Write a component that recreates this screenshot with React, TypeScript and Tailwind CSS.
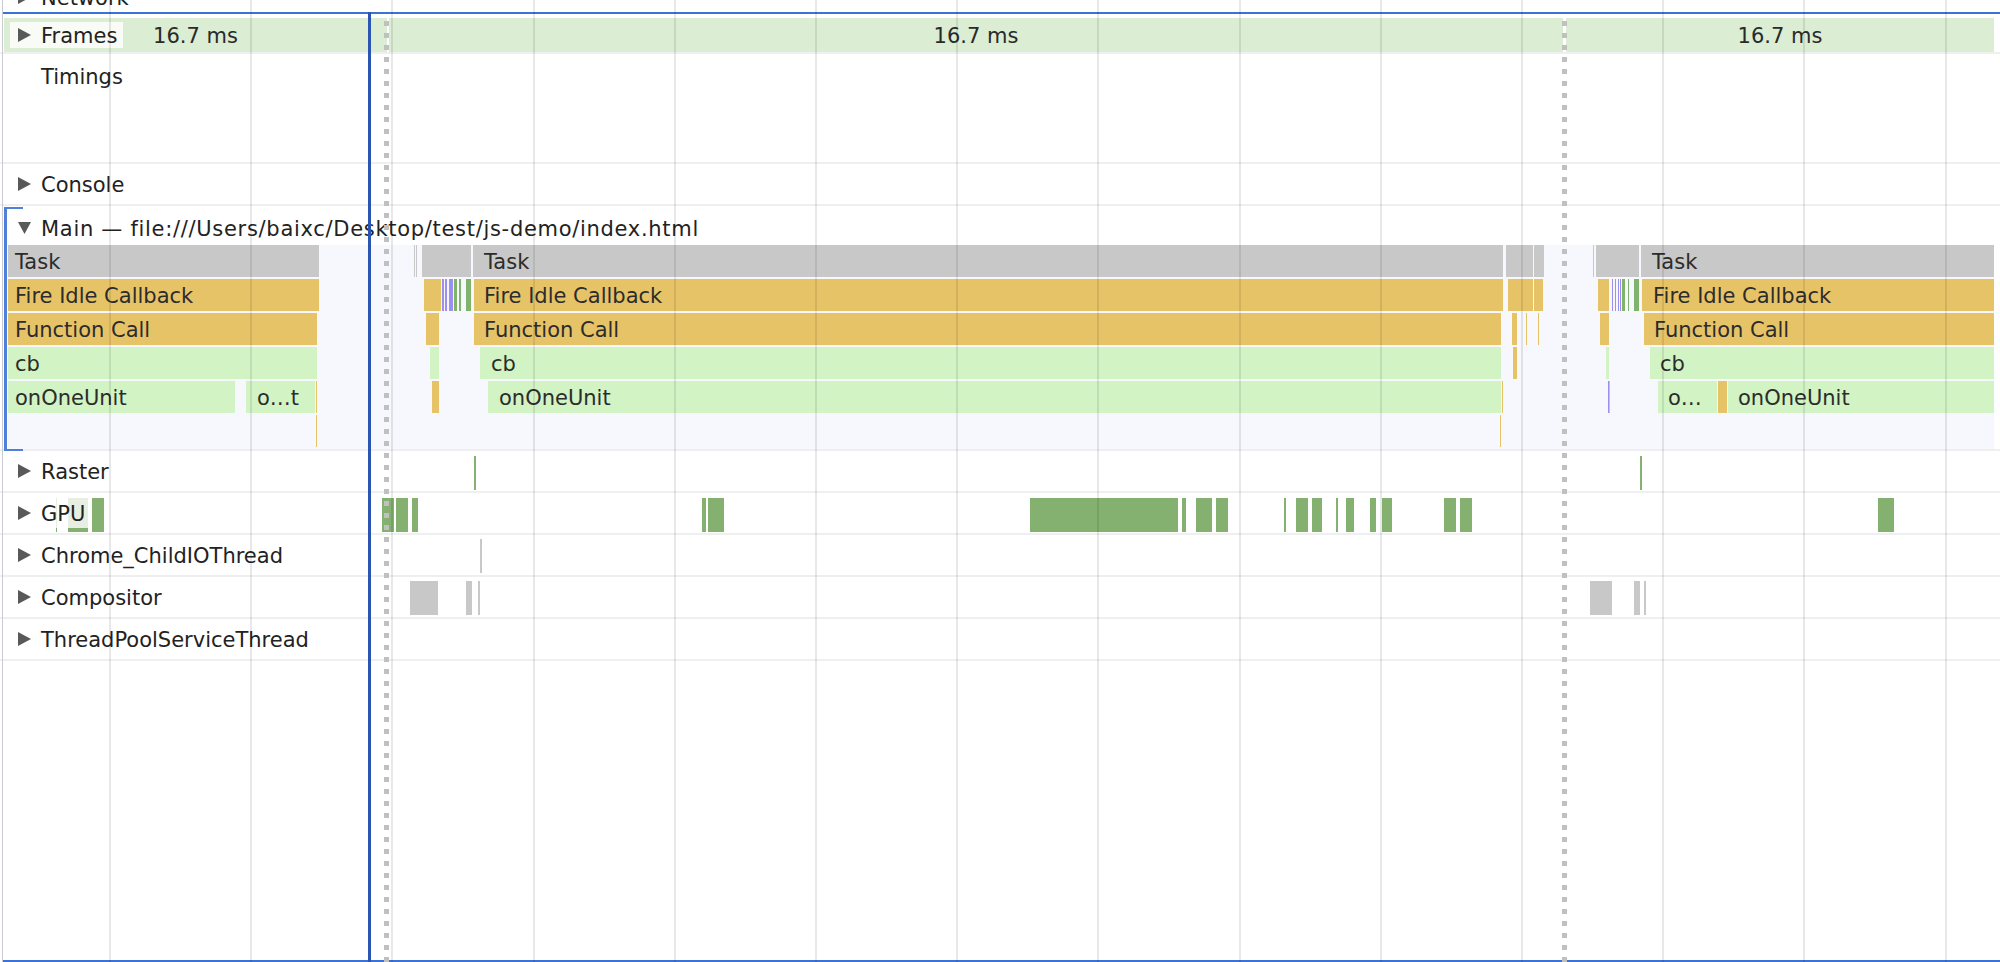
import React from "react";

type Bar = { x1: number; x2: number; c: string; t?: string; tx?: number };

const C = {
  task: "bg-[#c8c8c8]",
  y: "bg-[#e7c368]",
  g: "bg-[#d2f3c4]",
  p: "bg-[#9d8fef]",
  dg: "bg-[#80b36c]",
  gpu: "bg-[#84b070]",
  gray: "bg-[#c8c8c8]",
};

const mainRows: Bar[][] = [
  [
    { x1: 8, x2: 319, c: C.task, t: "Task", tx: 15 },
    { x1: 414, x2: 415, c: C.task },
    { x1: 416, x2: 417, c: C.task },
    { x1: 422, x2: 471, c: C.task },
    { x1: 473, x2: 1503, c: C.task, t: "Task", tx: 484 },
    { x1: 1506, x2: 1533, c: C.task },
    { x1: 1534, x2: 1544, c: C.task },
    { x1: 1593, x2: 1594, c: C.task },
    { x1: 1596, x2: 1639, c: C.task },
    { x1: 1641, x2: 1994, c: C.task, t: "Task", tx: 1652 },
  ],
  [
    { x1: 8, x2: 319, c: C.y, t: "Fire Idle Callback", tx: 15 },
    { x1: 424, x2: 441, c: C.y },
    { x1: 442, x2: 444, c: C.p },
    { x1: 445, x2: 447, c: C.p },
    { x1: 449, x2: 453, c: C.p },
    { x1: 454, x2: 457, c: C.dg },
    { x1: 459, x2: 461, c: C.dg },
    { x1: 466, x2: 471, c: C.dg },
    { x1: 474, x2: 1503, c: C.y, t: "Fire Idle Callback", tx: 484 },
    { x1: 1508, x2: 1533, c: C.y },
    { x1: 1534, x2: 1543, c: C.y },
    { x1: 1598, x2: 1609, c: C.y },
    { x1: 1612, x2: 1613, c: C.p },
    { x1: 1615, x2: 1616, c: C.p },
    { x1: 1618, x2: 1619, c: C.p },
    { x1: 1620, x2: 1621, c: C.p },
    { x1: 1622, x2: 1625, c: C.dg },
    { x1: 1628, x2: 1629, c: C.dg },
    { x1: 1634, x2: 1639, c: C.dg },
    { x1: 1642, x2: 1994, c: C.y, t: "Fire Idle Callback", tx: 1653 },
  ],
  [
    { x1: 8, x2: 317, c: C.y, t: "Function Call", tx: 15 },
    { x1: 426, x2: 439, c: C.y },
    { x1: 474, x2: 1501, c: C.y, t: "Function Call", tx: 484 },
    { x1: 1512, x2: 1517, c: C.y },
    { x1: 1526, x2: 1527, c: C.y },
    { x1: 1538, x2: 1539, c: C.y },
    { x1: 1600, x2: 1609, c: C.y },
    { x1: 1644, x2: 1994, c: C.y, t: "Function Call", tx: 1654 },
  ],
  [
    { x1: 8, x2: 317, c: C.g, t: "cb", tx: 15 },
    { x1: 430, x2: 439, c: C.g },
    { x1: 480, x2: 1501, c: C.g, t: "cb", tx: 491 },
    { x1: 1513, x2: 1517, c: C.y },
    { x1: 1606, x2: 1609, c: C.g },
    { x1: 1650, x2: 1994, c: C.g, t: "cb", tx: 1660 },
  ],
  [
    { x1: 8, x2: 235, c: C.g, t: "onOneUnit", tx: 15 },
    { x1: 246, x2: 315, c: C.g, t: "o…t", tx: 257 },
    { x1: 316, x2: 317, c: C.y },
    { x1: 432, x2: 439, c: C.y },
    { x1: 488, x2: 1501, c: C.g, t: "onOneUnit", tx: 499 },
    { x1: 1502, x2: 1503, c: C.y },
    { x1: 1608, x2: 1609, c: C.p },
    { x1: 1609, x2: 1610, c: C.y },
    { x1: 1658, x2: 1717, c: C.g, t: "o…", tx: 1668 },
    { x1: 1718, x2: 1727, c: C.y },
    { x1: 1728, x2: 1994, c: C.g, t: "onOneUnit", tx: 1738 },
  ],
  [
    { x1: 316, x2: 317, c: C.y },
    { x1: 1500, x2: 1501, c: C.y },
  ],
];

const gpu: [number, number][] = [
  [56, 57], [68, 88], [92, 104], [382, 394], [396, 408], [412, 418], [702, 706], [708, 724],
  [1030, 1178], [1182, 1186], [1196, 1212], [1216, 1228], [1284, 1286], [1296, 1308], [1312, 1322],
  [1336, 1338], [1346, 1354], [1370, 1376], [1382, 1392], [1444, 1456], [1460, 1472], [1878, 1894],
];
const raster: [number, number][] = [[474, 476], [1640, 1642]];
const childIO: [number, number][] = [[480, 482]];
const compositor: [number, number][] = [[410, 438], [466, 472], [478, 480], [1590, 1612], [1634, 1640], [1644, 1646]];

const gridXs = [109, 250, 391, 533, 674, 815, 956, 1097, 1239, 1380, 1521, 1662, 1803, 1945];

const Right = () => (
  <svg width="13" height="14" viewBox="0 0 13 14" className="shrink-0">
    <path d="M0 0 L13 7 L0 14 Z" fill="#595959" />
  </svg>
);
const Down = () => (
  <svg width="13" height="12" viewBox="0 0 13 12" className="shrink-0">
    <path d="M0 0 L13 0 L6.5 12 Z" fill="#595959" />
  </svg>
);

function Track({ label, events, top }: { label: string; events: [number, number][]; top: number }) {
  return (
    <div className="relative h-[42px] border-b-2 border-[#efefef] flex items-center">
      <div className="absolute inset-0">
        {events.map(([a, b], i) => (
          <div
            key={i}
            className={`absolute h-[34px] ${label === "GPU" || label === "Raster" ? C.gpu : C.gray}`}
            style={{ left: a, width: b - a, top }}
          />
        ))}
      </div>
      <div className="relative flex items-center h-[30px] ml-[10px] pl-[8px] pr-[6px] gap-[10px] bg-white/80">
        <Right />
        <span className="whitespace-nowrap pt-[4px]">{label}</span>
      </div>
    </div>
  );
}

export default function App() {
  return (
    <div className="relative w-[2000px] h-[962px] overflow-hidden bg-white font-['DejaVu_Sans',sans-serif] text-[21px] text-[#222]">
      <div className="flex flex-col h-full">
        {/* Network (cut off by the top edge) */}
        <div className="h-[12px] overflow-hidden">
          <div className="-mt-[14px] h-[22px] flex items-center pl-[18px] gap-[10px]">
            <Right />
            <span className="pt-[4px]">Network</span>
          </div>
        </div>
        <div className="h-[2px] ml-[3px] bg-[#3b72d8]" />

        {/* Frames */}
        <div className="pt-[4px] border-b-2 border-[#efefef]">
          <div className="relative h-[34px] ml-[4px] w-[1990px] flex text-[#2a2a2a]">
            <div className="w-[383px] pt-[3px] bg-[#dbedd3] flex items-center justify-center">16.7 ms</div>
            <div className="ml-[2px] w-[1174px] pt-[3px] bg-[#dbedd3] flex items-center justify-center">16.7 ms</div>
            <div className="ml-[3px] flex-1 pt-[3px] bg-[#dbedd3] flex items-center justify-center">16.7 ms</div>
            <div className="absolute left-[6px] top-[4px] h-[26px] flex items-center pl-[8px] pr-[6px] gap-[10px] bg-white/80 text-[#222]">
              <Right />
              <span className="pt-[3px]">Frames</span>
            </div>
          </div>
        </div>

        {/* Timings */}
        <div className="h-[110px] border-b-2 border-[#efefef]">
          <div className="h-[42px] pt-[5px] flex items-center pl-[41px]">Timings</div>
        </div>

        {/* Console */}
        <div className="h-[42px] border-b-2 border-[#efefef] flex items-center pl-[18px] gap-[10px]">
          <Right />
          <span className="pt-[4px]">Console</span>
        </div>

        {/* Main */}
        <div className="relative border-b-2 border-[#efefef]">
          <div className="h-[39px] pt-[5px] flex items-center pl-[18px] gap-[10px] whitespace-nowrap">
            <Down />
            <span className="tracking-[0.7px] pt-[3px]">Main — file:///Users/baixc/Desktop/test/js-demo/index.html</span>
          </div>
          <div className="relative h-[204px] ml-[8px] mr-[6px] bg-[#f7f8fd]">
            {mainRows.map((row, ri) =>
              row.map((b, bi) => (
                <div
                  key={`${ri}-${bi}`}
                  className={`absolute h-[32px] pt-[3px] flex items-center overflow-hidden whitespace-nowrap text-[#2c2c2c] ${b.c}`}
                  style={{ left: b.x1 - 8, width: b.x2 - b.x1, top: ri * 34, paddingLeft: b.t ? (b.tx ?? b.x1) - b.x1 : 0 }}
                >
                  {b.t}
                </div>
              ))
            )}
          </div>
          <div className="absolute left-[4px] top-[1px] h-[244px] w-[19px] border-l-[3px] border-y-2 border-[#4f81dc]" />
        </div>

        <Track label="Raster" events={raster} top={5} />
        <Track label="GPU" events={gpu} top={5} />
        <Track label="Chrome_ChildIOThread" events={childIO} top={4} />
        <Track label="Compositor" events={compositor} top={4} />
        <Track label="ThreadPoolServiceThread" events={[]} top={4} />

        <div className="flex-1" />
        <div className="h-[2px] ml-[3px] bg-[#3b72d8]" />
      </div>

      {/* overlays */}
      <div className="absolute left-[2px] top-0 bottom-0 w-px bg-[#cacad2]" />
      {gridXs.map((x) => (
        <div key={x} className="absolute top-0 bottom-0 w-[2px] bg-black/[0.09]" style={{ left: x }} />
      ))}
      <div className="absolute left-[384px] top-[21px] bottom-0 w-[5px] bg-[repeating-linear-gradient(to_bottom,#c0c0c0_0px,#c0c0c0_5px,transparent_5px,transparent_12px)]" />
      <div className="absolute left-[1562px] top-[21px] bottom-0 w-[5px] bg-[repeating-linear-gradient(to_bottom,#c0c0c0_0px,#c0c0c0_5px,transparent_5px,transparent_12px)]" />
      <div className="absolute left-[368px] top-[12px] bottom-0 w-[3px] bg-[#2a55b3]" />
    </div>
  );
}
